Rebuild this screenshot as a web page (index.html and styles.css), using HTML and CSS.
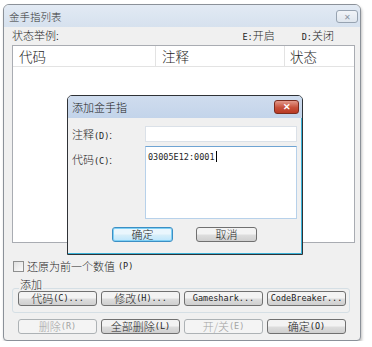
FILE: index.html
```html
<!DOCTYPE html>
<html lang="zh-CN">
<head>
    <meta charset="UTF-8">
    <title>金手指列表</title>
    <link rel="stylesheet" href="styles.css">
</head>
<body>

    <!-- Cheat list window -->
    <div class="window">
        <div class="titlebar">
            <span class="title">金手指列表</span>
            <span class="close">✕</span>
        </div>

        <div class="client">
            <div class="status">
                <span>状态举例:</span>
                <span class="legend">
                    <span><span class="en">E:</span>开启</span>
                    <span><span class="en">D:</span>关闭</span>
                </span>
            </div>

            <div class="list">
                <div class="list-head">
                    <div class="col">代码</div>
                    <div class="col">注释</div>
                    <div class="col">状态</div>
                </div>
            </div>

            <div class="check"><span class="box"></span>还原为前一个数值<span class="en">(P)</span></div>

            <div class="group-label">添加</div>
            <div class="group">
                <div class="btn-row">
                    <span class="btn">代码<span class="en">(C)...</span></span>
                    <span class="btn">修改<span class="en">(H)...</span></span>
                    <span class="btn"><span class="en">Gameshark...</span></span>
                    <span class="btn"><span class="en">CodeBreaker...</span></span>
                </div>
            </div>

            <div class="btn-row bottom-row">
                <span class="btn disabled">删除<span class="en">(R)</span></span>
                <span class="btn">全部删除<span class="en">(L)</span></span>
                <span class="btn disabled">开/关<span class="en">(E)</span></span>
                <span class="btn">确定<span class="en">(O)</span></span>
            </div>
        </div>

        <!-- Add cheat dialog -->
        <div class="dialog">
            <div class="dlg-title">
                <span>添加金手指</span>
                <span class="dlg-close">✕</span>
            </div>
            <div class="dlg-body">
                <div class="field">
                    <span class="field-label">注释<span class="en">(D)</span>:</span>
                    <div class="input"></div>
                </div>
                <div class="field">
                    <span class="field-label code-label">代码<span class="en">(C)</span>:</span>
                    <div class="input textarea"><span class="en">03005E12:0001</span><span class="caret"></span></div>
                </div>
                <div class="dlg-buttons">
                    <span class="btn default">确定</span>
                    <span class="btn">取消</span>
                </div>
            </div>
        </div>
    </div>

</body>
</html>
```

FILE: styles.css
```css
body {
    margin: 0;
    background: #fff;
    font-family: "Noto Sans CJK SC", sans-serif;
    font-size: 11px;
    font-weight: 300;
    color: #1e1e1e;
}

.en {
    font-family: "DejaVu Sans Mono", monospace;
    font-size: 8.5px;
    font-weight: normal;
}

/* Main window */
.window {
    position: relative;
    margin: 4px 0 0 3px;
    width: 358px;
    height: 337px;
    box-sizing: border-box;
    border: 1px solid #8b9199;
    border-radius: 6px 6px 4px 4px;
    background: #f0f0f0;
    box-shadow: 1px 2px 3px rgba(0, 0, 0, 0.25);
    overflow: hidden;
}

.titlebar {
    height: 22px;
    display: flex;
    align-items: center;
    justify-content: space-between;
    padding: 0 2px 0 5px;
    background: linear-gradient(#e2eaf4, #d6e1ee);
}

.title {
    font-size: 10.5px;
    color: #333;
}

.close {
    width: 20px;
    height: 11px;
    border: 1px solid #97a3b1;
    border-radius: 3px;
    background: linear-gradient(#f1f4f8, #dfe6ee);
    color: #8a95a2;
    font-size: 8px;
    line-height: 11px;
    text-align: center;
}

.client {
    padding: 0 5px 0 8px;
}

.status {
    height: 16px;
    margin-bottom: 2px;
    display: flex;
    align-items: center;
}

.legend {
    margin-left: auto;
    margin-right: 21px;
    display: flex;
    gap: 27px;
}

/* List view */
.list {
    height: 198px;
    box-sizing: border-box;
    border: 1px solid #a9acb2;
    background: #fff;
}

.list-head {
    display: grid;
    grid-template-columns: 143px 129px 1fr;
    height: 20px;
    border-bottom: 1px solid #e3e3e3;
}

.list-head .col {
    padding-left: 6px;
    font-size: 13.5px;
    line-height: 20px;
    border-right: 1px solid #e3e3e3;
}

.list-head .col:last-child {
    border-right: none;
    padding-left: 5px;
}

.check {
    margin-top: 16px;
    height: 14px;
    display: flex;
    align-items: center;
    gap: 3px;
    padding-left: 1px;
}

.box {
    width: 9px;
    height: 9px;
    border: 1px solid #8e8f8f;
    background: linear-gradient(135deg, #e0e0e0, #fbfbfb);
}

/* Group box */
.group-label {
    position: relative;
    width: fit-content;
    margin: 5px 0 -2px 7px;
    padding: 0 1px;
    height: 12px;
    line-height: 12px;
    background: #f0f0f0;
}

.group {
    margin-right: 5px;
    padding: 2px 3px 6px 5px;
    border: 1px solid #d5dfe5;
    border-radius: 3px;
}

.btn-row {
    display: grid;
    grid-template-columns: repeat(4, 79px);
    column-gap: 4px;
}

.bottom-row {
    margin-top: 6px;
    padding-left: 6px;
}

/* Buttons */
.btn {
    height: 15px;
    box-sizing: border-box;
    border: 1px solid #707070;
    border-radius: 3px;
    background: linear-gradient(#f3f3f3 45%, #dddddd 55%, #cfcfcf);
    display: flex;
    align-items: center;
    justify-content: center;
    line-height: 13px;
}

.btn.disabled {
    color: #a3a3a3;
    border-color: #adb2b5;
    background: #f4f4f4;
}

.btn.default {
    border-color: #3c8fc4;
    box-shadow: inset 0 0 0 1px #7fd0f5;
    background: linear-gradient(#eaf6fd 45%, #d7eef9 55%, #bde6fd);
}

/* Dialog */
.dialog {
    position: absolute;
    left: 63px;
    top: 90px;
    width: 236px;
    height: 160px;
    box-sizing: border-box;
    border: 1px solid #2f3236;
    border-radius: 5px 5px 0 0;
    background: #f0f0f0;
    box-shadow: inset -1px -1px 0 #3ab2d8;
    overflow: hidden;
}

.dlg-title {
    height: 22px;
    display: flex;
    align-items: center;
    justify-content: space-between;
    padding: 0 3px 0 4px;
    background: linear-gradient(#cfdcee, #c3d4ea);
    color: #222;
}

.dlg-close {
    width: 23px;
    height: 12px;
    border: 1px solid #7b2c1e;
    border-radius: 3px;
    background: linear-gradient(#e3998a, #c7503a 55%, #b93a24);
    color: #fff;
    font-size: 9px;
    font-weight: bold;
    line-height: 12px;
    text-align: center;
}

.dlg-body {
    padding: 8px 0 0 4px;
}

.field {
    display: grid;
    grid-template-columns: 73px 152px;
    margin-bottom: 4px;
}

.field-label {
    height: 16px;
    line-height: 16px;
}

.code-label {
    margin-top: 5px;
}

.input {
    height: 16px;
    box-sizing: border-box;
    border: 1px solid #dbe1e8;
    background: #fff;
}

.input.textarea {
    height: 73px;
    border-color: #6fa4d3 #b7d1ea #b7d1ea #b7d1ea;
    padding: 2px 0 0 2px;
    line-height: 12px;
}

.caret {
    display: inline-block;
    width: 1px;
    height: 11px;
    margin-left: 1px;
    background: #000;
    vertical-align: -2px;
}

.dlg-buttons {
    display: flex;
    gap: 23px;
    margin-top: 8px;
    padding-left: 40px;
}

.dlg-buttons .btn {
    width: 61px;
}
```
